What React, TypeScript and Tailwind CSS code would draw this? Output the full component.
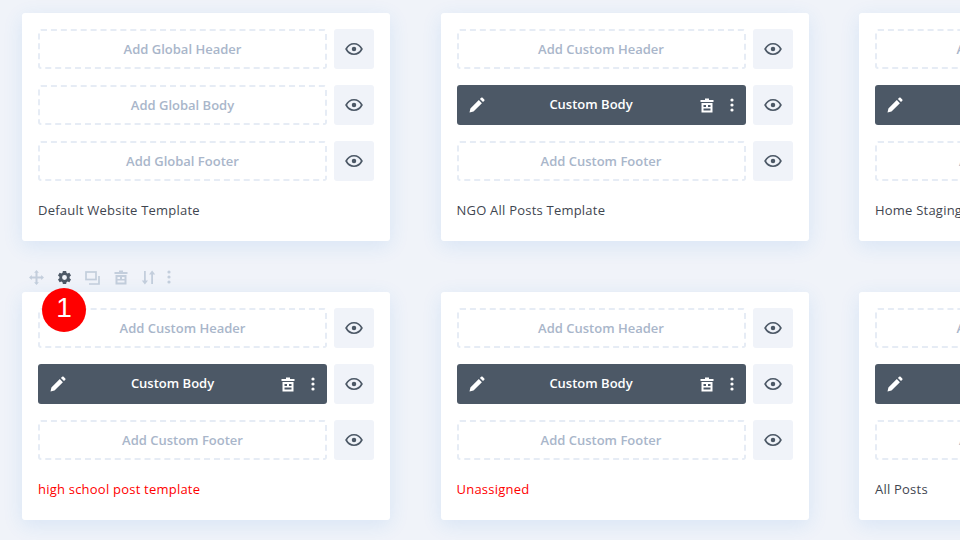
import React from "react";

const Eye = () => (
  <svg width="18" height="18" viewBox="0 0 24 24" fill="none" stroke="#4c5866" strokeWidth="2.2">
    <path d="M1.500 12C4 7.200 7.600 5 12 5s8 2.200 10.500 7c-2.500 4.800-6.100 7-10.500 7S4 16.800 1.500 12z" />
    <circle cx="12" cy="12" r="3" fill="#4c5866" stroke="none" />
  </svg>
);

const Trash = ({ color = "#fff" }: { color?: string }) => (
  <svg width="14" height="15" viewBox="0 0 14 15" fill={color}>
    <path fillRule="evenodd" d="M5 0.500h4v1.500h4.500v2H0.500V2H5zM1.500 5h11v9.500h-11zM3.500 7v2h2.500V7zM8 7v2h2.500V7zM3.500 10.500v2h7v-2z" />
  </svg>
);

const Dots = ({ color = "#fff" }: { color?: string }) => (
  <svg width="4" height="14" viewBox="0 0 4 14" fill={color}>
    <circle cx="2" cy="2" r="1.600" />
    <circle cx="2" cy="7" r="1.600" />
    <circle cx="2" cy="12" r="1.600" />
  </svg>
);

const Pencil = () => (
  <svg width="16" height="16" viewBox="0 0 16 16" fill="#fff">
    <path d="M0.500 15.500l0.900-4L9.800 3.100l3.100 3.100-8.400 8.400zM10.900 2l1.300-1.300c.4-.4 1-.4 1.400 0l1.700 1.700c.4.400.4 1 0 1.400L14 5.100z" />
  </svg>
);

const EyeBox = () => (
  <div className="flex h-10 w-10 shrink-0 items-center justify-center rounded-[3px] bg-[#f0f3f9]">
    <Eye />
  </div>
);

const Slot = ({ label }: { label: string }) => (
  <div className="flex gap-[7px]">
    <div className="flex h-10 flex-1 items-center justify-center rounded-[3px] border-2 border-dashed border-[#e6ecf5] pt-[2px] text-[13px] font-semibold text-[#a9b6ca]">
      {label}
    </div>
    <EyeBox />
  </div>
);

const Body = () => (
  <div className="flex gap-[7px]">
    <div className="flex h-10 flex-1 items-center rounded-[3px] bg-[#4c5866] pl-3 pr-3 text-[13px] font-semibold text-white">
      <Pencil />
      <span className="flex-1 pr-[2px] text-center">Custom Body</span>
      <Trash />
      <span className="ml-4 flex"><Dots /></span>
    </div>
    <EyeBox />
  </div>
);

type CardData = { header: string; body?: boolean; footer: string; middle?: string; title: string; red?: boolean };

const Card = ({ d }: { d: CardData }) => (
  <div className="flex h-[228px] w-[368px] shrink-0 flex-col gap-4 rounded-[3px] bg-white p-4 shadow-[0_5px_20px_rgba(43,135,218,0.12)]">
    <Slot label={d.header} />
    {d.body ? <Body /> : <Slot label={d.middle ?? ""} />}
    <Slot label={d.footer} />
    <div className={`mt-[1px] text-[13px] font-medium leading-[24px] tracking-[0.22px] ${d.red ? "text-[#ff0000]" : "text-[#3f4650]"}`}>
      {d.title}
    </div>
  </div>
);

const row1: CardData[] = [
  { header: "Add Global Header", middle: "Add Global Body", footer: "Add Global Footer", title: "Default Website Template" },
  { header: "Add Custom Header", body: true, footer: "Add Custom Footer", title: "NGO All Posts Template" },
  { header: "Add Custom Header", body: true, footer: "Add Custom Footer", title: "Home Staging All Posts" },
];
const row2: CardData[] = [
  { header: "Add Custom Header", body: true, footer: "Add Custom Footer", title: "high school post template", red: true },
  { header: "Add Custom Header", body: true, footer: "Add Custom Footer", title: "Unassigned", red: true },
  { header: "Add Custom Header", body: true, footer: "Add Custom Footer", title: "All Posts" },
];

const Toolbar = () => (
  <div className="flex h-[51px] items-end gap-[14px] pb-[7px] pl-[7px]">
    <svg width="15" height="15" viewBox="0 0 15 15" fill="#c3cedc">
      <path d="M7.500 0l2.400 2.800H8.500v3.700h3.700V5.100L15 7.500l-2.800 2.400V8.500H8.500v3.700h1.400L7.500 15l-2.400-2.800h1.400V8.500H2.800v1.400L0 7.500l2.800-2.400v1.400h3.700V2.800H5.100z" />
    </svg>
    <svg width="13" height="15" viewBox="0 0 24 24" className="overflow-visible" fill="#4c5866" fillRule="evenodd">
      <path d="M9 0h6l.7 3.400 2 1 3.300-1.100 3 5.200-2.600 2.300v2.400l2.600 2.300-3 5.200-3.300-1.100-2 1L15 24H9l-.7-3.400-2-1L3 20.700l-3-5.200 2.600-2.300v-2.400L0 8.500l3-5.200 3.300 1.100 2-1zM12 7.500a4.500 4.500 0 1 0 0 9 4.500 4.500 0 0 0 0-9z" />
    </svg>
    <svg width="15" height="14" viewBox="0 0 15 14" fill="none" stroke="#c3cedc" strokeWidth="1.700">
      <rect x="1" y="1" width="10" height="7.500" />
      <path d="M14 5v8H4" />
    </svg>
    <span className="flex"><Trash color="#c3cedc" /></span>
    <span className="-ml-[1px] flex">
      <svg width="15" height="15" viewBox="0 0 15 15" fill="#c3cedc">
        <path d="M3 1h1.800v9.500H7L3.900 14.500.8 10.500H3zM10.200 14V4.500H8L11.100.5l3.100 4H12V14z" />
      </svg>
    </span>
    <span className="-ml-[3px] flex pb-[1px]"><Dots color="#c3cedc" /></span>
  </div>
);

export default function App() {
  return (
    <div className="relative h-[540px] w-[960px] overflow-hidden bg-[#f0f3f9] pl-[22px] pt-[13px] [font-family:'Open_Sans',sans-serif]">
      <div className="flex gap-[50.5px]">
        {row1.map((d) => <Card key={d.title} d={d} />)}
      </div>
      <Toolbar />
      <div className="flex gap-[50.5px]">
        {row2.map((d) => <Card key={d.title} d={d} />)}
      </div>
      <div className="absolute left-[42px] top-[288px] flex h-11 w-11 items-center justify-center rounded-full bg-[#ff0000] pb-[4px] text-[28px] leading-none text-white [font-family:'Liberation_Sans',sans-serif]">
        1
      </div>
    </div>
  );
}
